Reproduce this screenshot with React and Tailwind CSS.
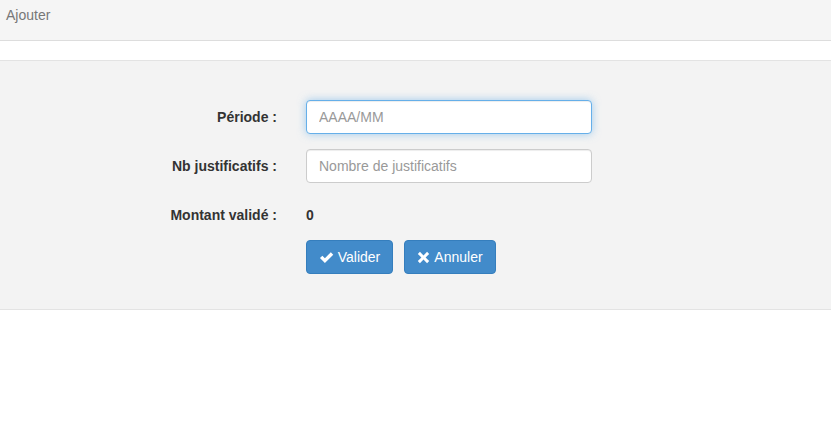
import React from 'react';

const CheckIcon = () => (
  <svg viewBox="0 0 16 16" className="w-[15px] h-[15px]" fill="white">
    <path d="M1 8.6 L3.6 6 L6.3 8.7 L12.6 2.4 L15.2 5 L6.3 13.9 Z" />
  </svg>
);

const CrossIcon = () => (
  <svg viewBox="0 0 16 16" className="w-[13px] h-[13px]" fill="white">
    <path d="M1 3.6 L3.6 1 L8 5.4 L12.4 1 L15 3.6 L10.6 8 L15 12.4 L12.4 15 L8 10.6 L3.6 15 L1 12.4 L5.4 8 Z" />
  </svg>
);

const Row = ({ label, children }) => (
  <div className="flex items-start">
    <label className="w-[277px] pt-[7px] pr-0 text-right font-bold text-[#333] leading-[20px]">{label}</label>
    <div className="ml-[29px] w-[286px]">{children}</div>
  </div>
);

export default function App() {
  return (
    <div className="min-h-[434px] bg-white text-[14px] text-[#333]" style={{ fontFamily: '"Liberation Sans", Arial, sans-serif' }}>
      <div className="h-[41px] bg-[#f5f5f5] border-b border-[#dddddd] px-[6px] pt-[5px]">
        <span className="text-[#777] leading-[20px]">Ajouter</span>
      </div>
      <div className="h-[19px]" />
      <div className="bg-[#f3f3f3] border-t border-b border-[#e3e3e3] pt-[39px] pb-[35px]">
        <div className="flex flex-col gap-[15px]">
          <Row label="Période :">
            <input
              placeholder="AAAA/MM"
              className="w-full h-[34px] px-[12px] bg-white border border-[#66afe9] rounded-[4px] outline-none shadow-[inset_0_1px_1px_rgba(0,0,0,0.075),0_0_8px_rgba(102,175,233,0.6)] placeholder:text-[#999]"
            />
          </Row>
          <Row label="Nb justificatifs :">
            <input
              placeholder="Nombre de justificatifs"
              className="w-full h-[34px] px-[12px] bg-white border border-[#cccccc] rounded-[4px] outline-none shadow-[inset_0_1px_1px_rgba(0,0,0,0.075)] placeholder:text-[#999]"
            />
          </Row>
          <Row label="Montant validé :">
            <div className="pt-[7px] font-bold leading-[20px]">0</div>
          </Row>
          <div className="flex ml-[306px] gap-[11px]">
            <button className="h-[34px] w-[87px] flex items-center justify-center gap-[4px] bg-[#428bca] border border-[#357ebd] rounded-[4px] text-white">
              <CheckIcon />
              <span>Valider</span>
            </button>
            <button className="h-[34px] w-[92px] flex items-center justify-center gap-[4px] bg-[#428bca] border border-[#357ebd] rounded-[4px] text-white">
              <CrossIcon />
              <span>Annuler</span>
            </button>
          </div>
        </div>
      </div>
    </div>
  );
}
